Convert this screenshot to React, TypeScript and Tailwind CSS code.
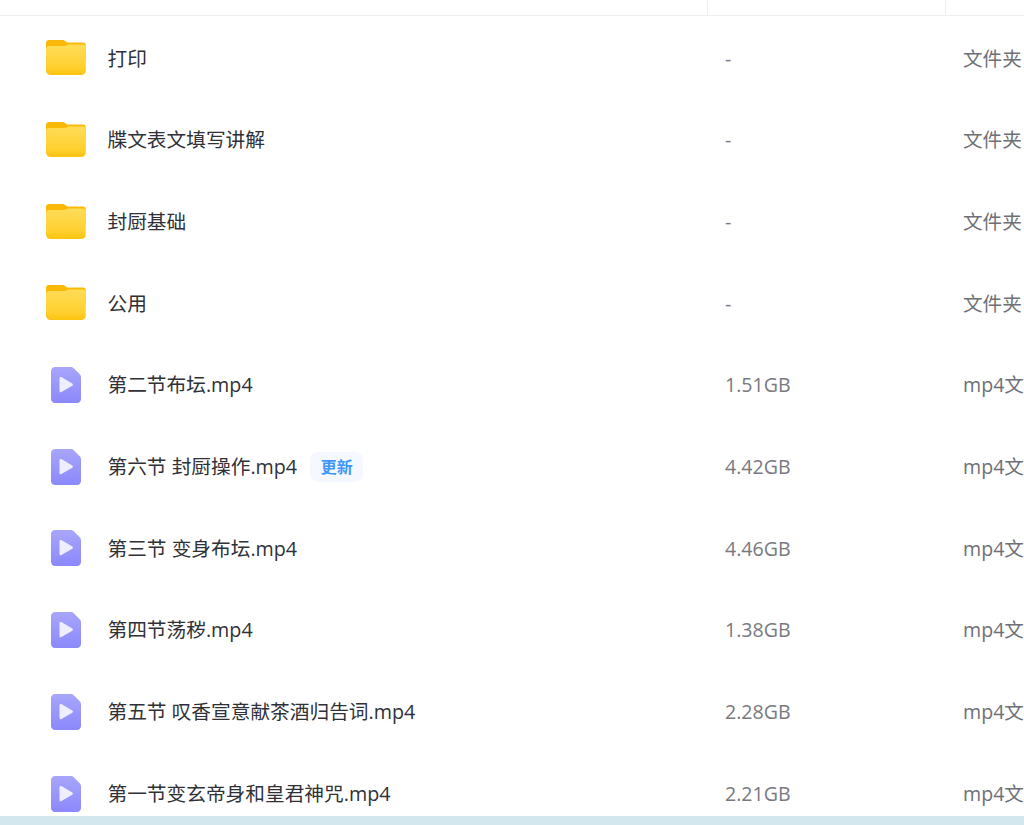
const rows = [
  { name: "打印", size: "-", type: "文件夹", folder: true },
  { name: "牒文表文填写讲解", size: "-", type: "文件夹", folder: true },
  { name: "封厨基础", size: "-", type: "文件夹", folder: true },
  { name: "公用", size: "-", type: "文件夹", folder: true },
  { name: "第二节布坛.mp4", size: "1.51GB", type: "mp4文件" },
  { name: "第六节 封厨操作.mp4", size: "4.42GB", type: "mp4文件", badge: "更新" },
  { name: "第三节 变身布坛.mp4", size: "4.46GB", type: "mp4文件" },
  { name: "第四节荡秽.mp4", size: "1.38GB", type: "mp4文件" },
  { name: "第五节 叹香宣意献茶酒归告词.mp4", size: "2.28GB", type: "mp4文件" },
  { name: "第一节变玄帝身和皇君神咒.mp4", size: "2.21GB", type: "mp4文件" },
];

const FolderIcon = () => (
  <svg width="40" height="36" viewBox="0 0 40 36" className="shrink-0">
    <defs>
      <linearGradient id="folderFront" x1="0" y1="0" x2="0" y2="1">
        <stop offset="0" stopColor="#ffdc58" />
        <stop offset="0.75" stopColor="#ffd02e" />
        <stop offset="1" stopColor="#fcc20f" />
      </linearGradient>
    </defs>
    <path d="M3 0h13c1.500 0 2.500.4 3.500 1.200L21 2.500h16c1.700 0 2.800 1.300 2.800 3V20H0V3c0-1.700 1.300-3 3-3z" fill="#fbb907" />
    <path d="M3 6h15c1.300 0 2.300-.3 3.200-.9l1-.6H37c1.700 0 2.800 1.300 2.800 3V30.500c0 2.500-2 4.500-4.500 4.500H4.500C2 35 0 33 0 30.500V9c0-1.700 1.300-3 3-3z" fill="url(#folderFront)" />
  </svg>
);

const VideoIcon = () => (
  <svg width="30" height="36" viewBox="0 0 30 36" className="shrink-0">
    <defs>
      <linearGradient id="videoBody" x1="0" y1="0" x2="0" y2="1">
        <stop offset="0" stopColor="#a8a6fb" />
        <stop offset="1" stopColor="#8b88fb" />
      </linearGradient>
    </defs>
    <path d="M4 0h16c1 0 1.800.4 2.500 1l6.500 6.500c.6.700 1 1.500 1 2.500V32c0 2.200-1.800 4-4 4H4c-2.200 0-4-1.800-4-4V4c0-2.200 1.800-4 4-4z" fill="url(#videoBody)" />
    <path d="M8.500 11.200c0-1 1-1.600 1.900-1.100l10.900 6.400c.9.500.9 1.700 0 2.200l-10.900 6.400c-.9.500-1.900-.1-1.900-1.100z" fill="#eeeeff" />
  </svg>
);

export default function App() {
  return (
    <div
      className="flex h-[825px] w-[1024px] flex-col overflow-hidden bg-white"
      style={{ fontFamily: '"Open Sans", "Noto Sans CJK SC", sans-serif' }}
    >
      <div className="flex-1 overflow-hidden">
        <div className="grid h-[16px] grid-cols-[708px_238px_78px] border-b border-[#efefef]">
          <div className="border-r border-[#efefef]" />
          <div className="border-r border-[#efefef]" />
          <div />
        </div>
        <div className="pt-[1.500px]">
          {rows.map((row) => (
            <div key={row.name} className="grid h-[81.7px] grid-cols-[708px_238px_78px] items-center">
              <div className="flex items-center">
                <div className="flex w-[107.5px] shrink-0 justify-center pl-[23.500px]">
                  {row.folder ? <FolderIcon /> : <VideoIcon />}
                </div>
                <span className="whitespace-nowrap text-[19.7px] text-[#2f3137]">{row.name}</span>
                {row.badge && (
                  <span className="ml-[13px] flex h-[30px] w-[53px] items-center justify-center rounded-lg bg-[#f5f8fe] text-[16px] font-semibold text-[#3f97fb]">
                    {row.badge}
                  </span>
                )}
              </div>
              <div className="pl-[17px] text-[19.6px] text-[#787a80]">{row.size}</div>
              <div className="whitespace-nowrap pl-[17px] text-[19.6px] text-[#6e7076]">{row.type}</div>
            </div>
          ))}
        </div>
      </div>
      <div className="h-[9px] shrink-0 bg-[#d3e7ee]" />
    </div>
  );
}
